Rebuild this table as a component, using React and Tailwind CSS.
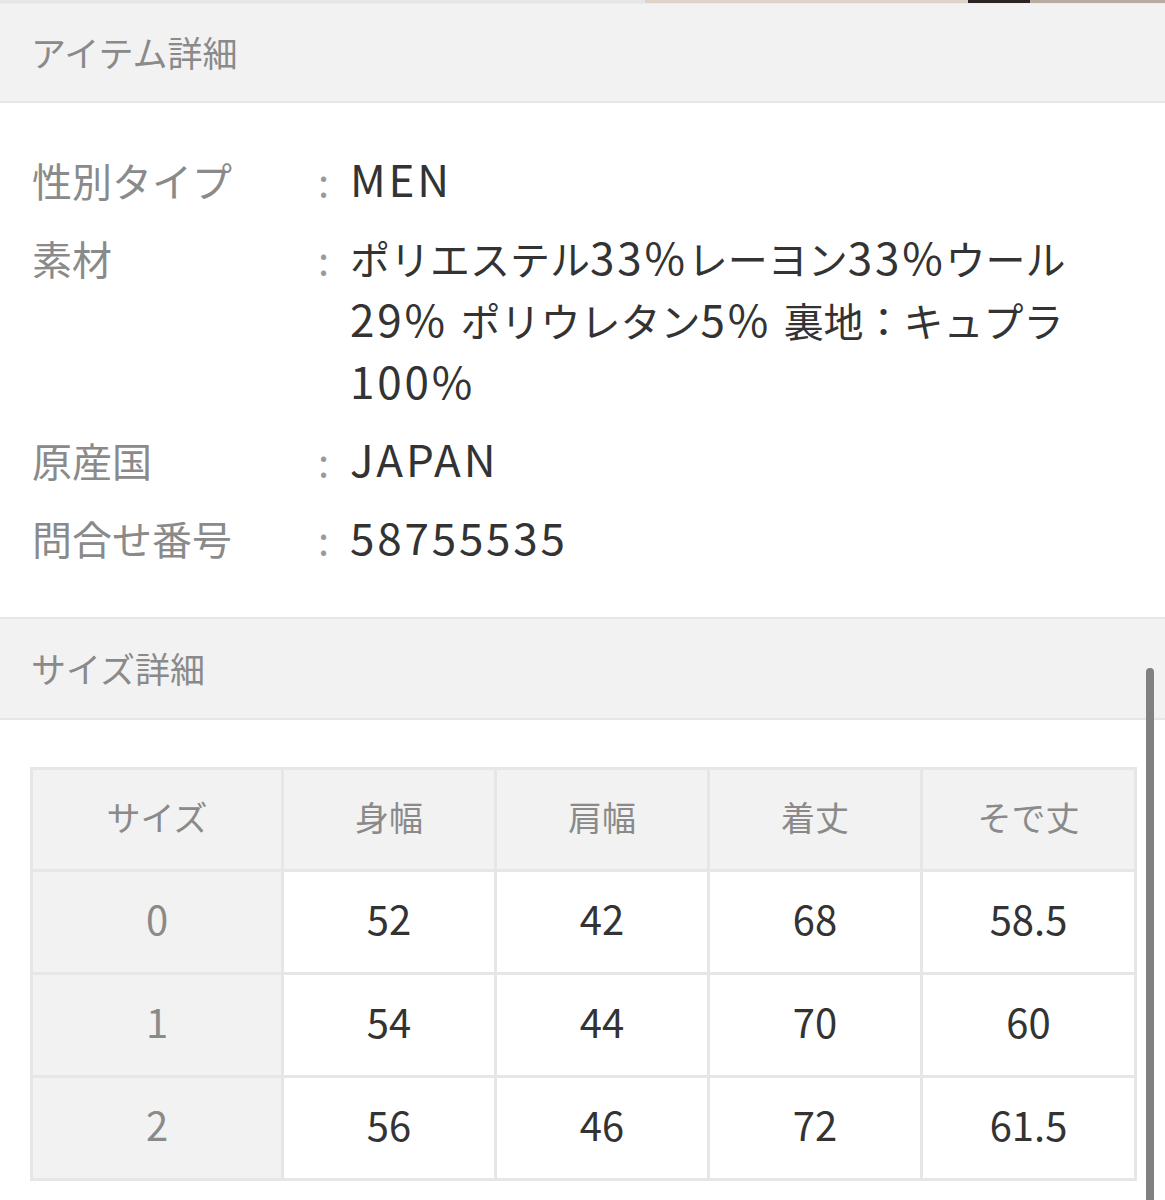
import React from "react";

const font = { fontFamily: '"Noto Sans CJK JP", "Noto Sans", sans-serif' };

function L({ children }) {
  return <span className="text-[44px] leading-none tracking-[2.8px]">{children}</span>;
}

function InfoRow({ label, children }) {
  return (
    <div className="flex">
      <div className="w-[318px] shrink-0 pl-[32px] text-[#8a8a8a]">{label}</div>
      <div className="w-[32px] shrink-0 text-[#9a9a9a]">:</div>
      <div className="text-[#333333]">{children}</div>
    </div>
  );
}

const head = ["サイズ", "身幅", "肩幅", "着丈", "そで丈"];
const rows = [
  ["0", "52", "42", "68", "58.5"],
  ["1", "54", "44", "70", "60"],
  ["2", "56", "46", "72", "61.5"],
];
const widths = ["w-[251px]", "w-[213px]", "w-[213px]", "w-[213px]", "w-[214px]"];

export default function App() {
  return (
    <div className="relative w-[1165px] h-[1200px] overflow-hidden bg-white" style={font}>
      {/* top strip */}
      <div className="flex h-[3px]">
        <div className="w-[645px] bg-[#e6e6e6]" />
        <div className="w-[323px] bg-[#ddd3c7]" />
        <div className="w-[62px] bg-[#2a2522]" />
        <div className="flex-1 bg-[#b9ada1]" />
      </div>
      <div className="h-[1px] bg-[#ececec]" />
      {/* header 1 */}
      <div className="h-[99px] bg-[#f2f2f2] border-b-[2px] border-[#e6e6e6] flex items-center pl-[31px] text-[35px] text-[#8a8a8a]">
        アイテム詳細
      </div>
      {/* info rows */}
      <div className="pt-[46px] pb-[48px] flex flex-col gap-[16px] text-[40px] leading-[62px]">
        <InfoRow label="性別タイプ"><L>MEN</L></InfoRow>
        <InfoRow label="素材">
          ポリエステル<L>33%</L>レーヨン<L>33%</L>ウール
          <br />
          <L>29% </L>ポリウレタン<L>5% </L>裏地：キュプラ
          <br />
          <L>100%</L>
        </InfoRow>
        <InfoRow label="原産国"><L>JAPAN</L></InfoRow>
        <InfoRow label="問合せ番号"><L>58755535</L></InfoRow>
      </div>
      {/* header 2 */}
      <div className="h-[103px] bg-[#f2f2f2] border-t-[2px] border-b-[2px] border-[#e6e6e6] flex items-center pl-[31px] text-[35px] text-[#8a8a8a]">
        サイズ詳細
      </div>
      {/* size table */}
      <div className="pt-[47px] pl-[30px]">
        <table className="border-collapse w-[1104px] table-fixed">
          <thead>
            <tr className="h-[102px]">
              {head.map((h, i) => (
                <th
                  key={i}
                  className={`${widths[i]} pb-[6px] border-[3px] border-[#e6e6e6] bg-[#f2f2f2] text-[34px] font-normal text-[#8a8a8a] text-center`}
                >
                  {h}
                </th>
              ))}
            </tr>
          </thead>
          <tbody>
            {rows.map((r, ri) => (
              <tr key={ri} className="h-[103px]">
                {r.map((c, ci) => (
                  <td
                    key={ci}
                    className={
                      ci === 0
                        ? "pb-[8px] border-[3px] border-[#e6e6e6] bg-[#f2f2f2] text-[40px] text-[#8a8a8a] text-center"
                        : "pb-[8px] border-[3px] border-[#e6e6e6] bg-white text-[40px] text-[#333333] text-center"
                    }
                  >
                    {c}
                  </td>
                ))}
              </tr>
            ))}
          </tbody>
        </table>
      </div>
      {/* scrollbar overlay */}
      <div className="absolute left-[1146px] top-[668px] w-[8px] h-[540px] rounded-full bg-[#808080]" />
    </div>
  );
}
